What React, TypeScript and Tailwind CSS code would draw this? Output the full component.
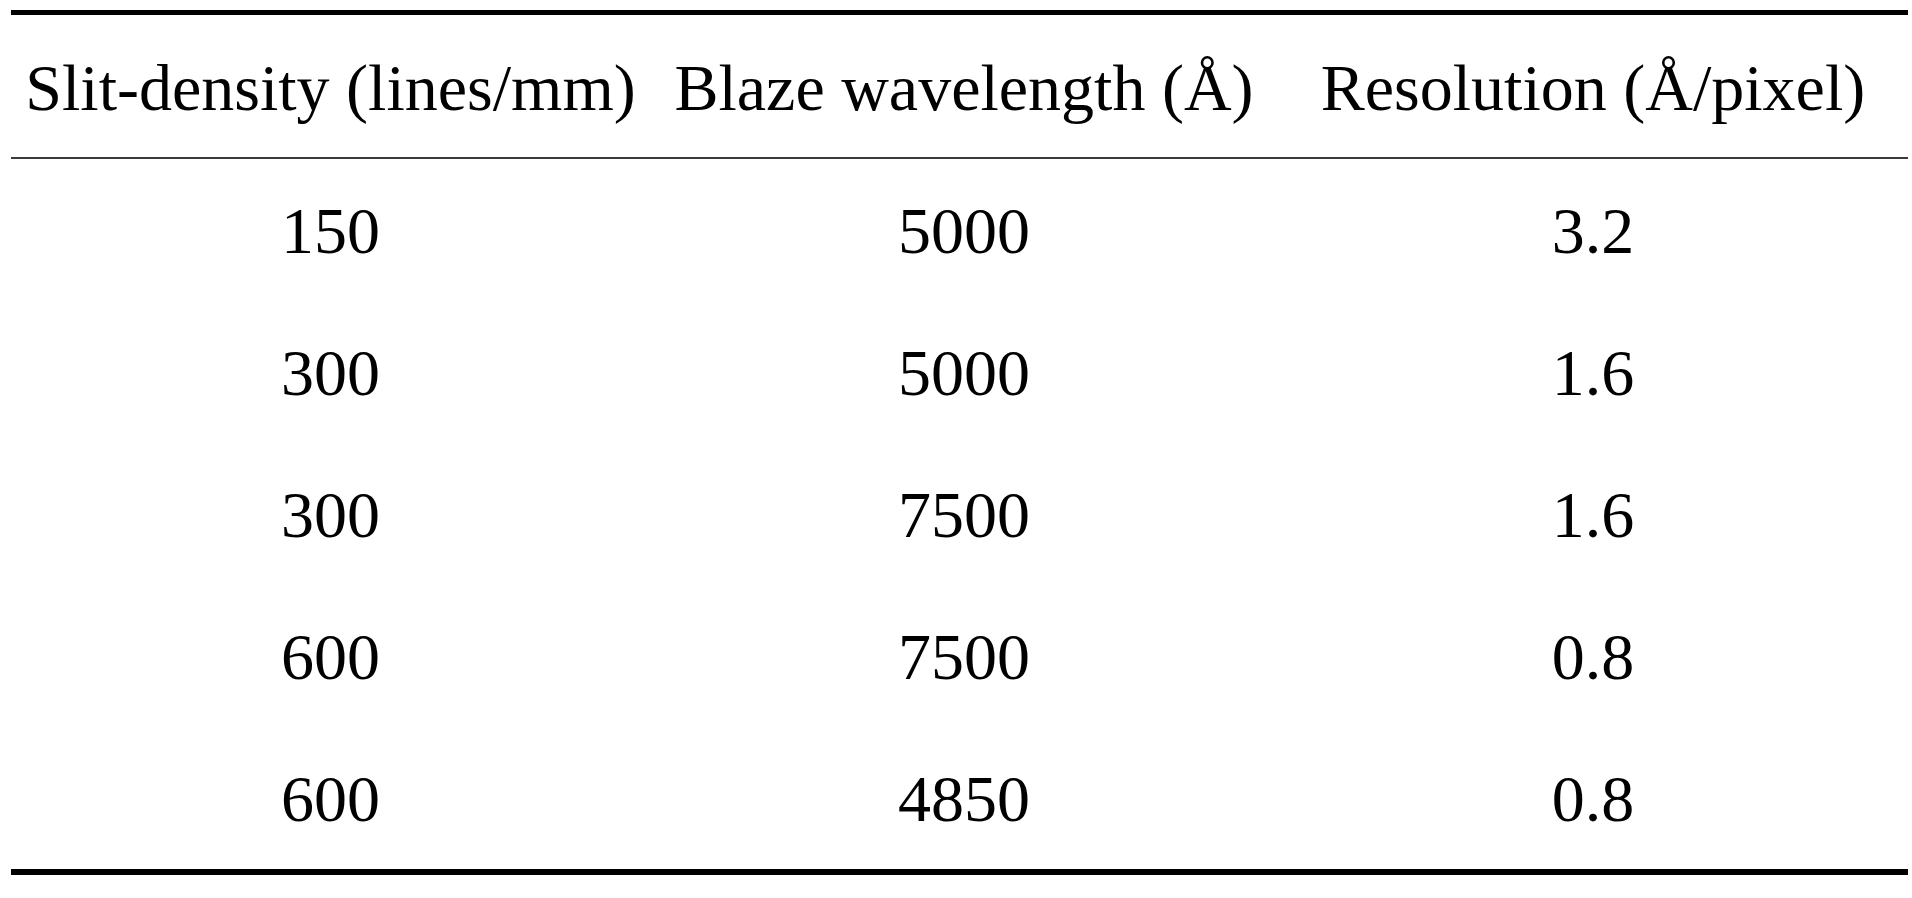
import React from "react";

const rows: [string, string, string][] = [
  ["150", "5000", "3.2"],
  ["300", "5000", "1.6"],
  ["300", "7500", "1.6"],
  ["600", "7500", "0.8"],
  ["600", "4850", "0.8"],
];

export default function App() {
  return (
    <div
      className="w-[1912px] h-[898px] bg-white text-black overflow-hidden"
      style={{ fontFamily: '"Liberation Serif", "Times New Roman", serif' }}
    >
      <div className="ml-[11px] mt-[10px] w-[1897px]">
        <div className="h-[5px] bg-black" />
        <div className="grid grid-cols-[639px_628px_630px] h-[142px] items-center text-[66px] leading-[73px] pt-[3px]">
          <div className="text-center whitespace-nowrap">Slit-density (lines/mm)</div>
          <div className="text-center whitespace-nowrap">Blaze wavelength (Å)</div>
          <div className="text-center whitespace-nowrap">Resolution (Å/pixel)</div>
        </div>
        <div className="h-[2px] bg-[#3a3a3a]" />
        {rows.map((r, i) => (
          <div
            key={i}
            className="grid grid-cols-[639px_628px_630px] h-[142px] items-center text-[66px] leading-[73px]"
          >
            <div className="text-center">{r[0]}</div>
            <div className="text-center">{r[1]}</div>
            <div className="text-center">{r[2]}</div>
          </div>
        ))}
        <div className="h-[6px] bg-black" />
      </div>
    </div>
  );
}
